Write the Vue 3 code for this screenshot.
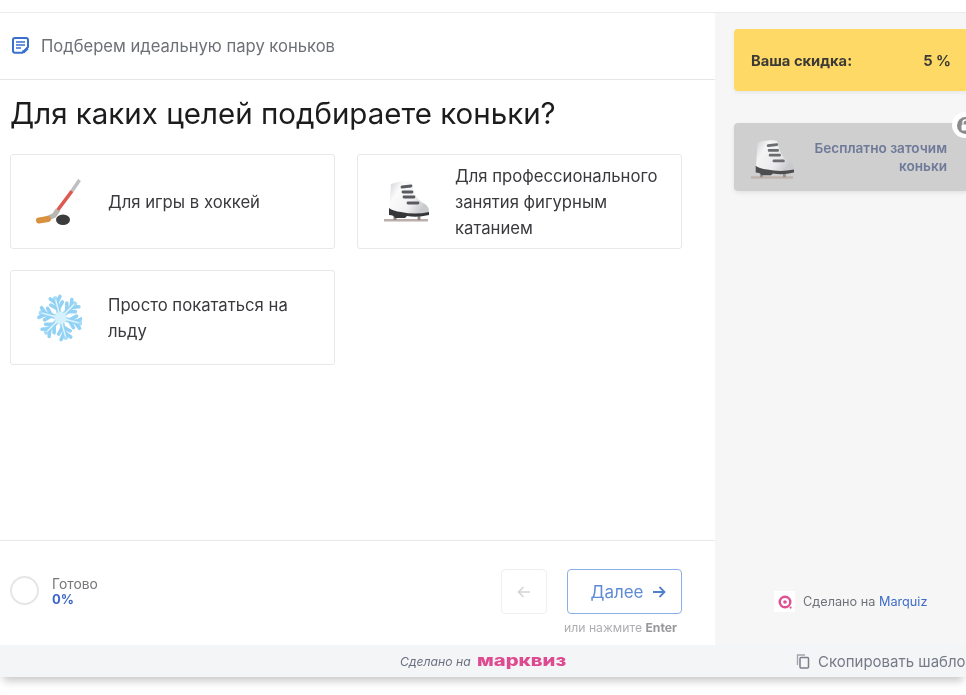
<script setup>
const options = [
  { id: "stick", text: "Для игры в хоккей" },
  { id: "skate", text: "Для профессионального занятия фигурным катанием" },
  { id: "flake", text: "Просто покататься на льду" },
];
const flakeArms = [0, 60, 120, 180, 240, 300];
</script>

<template>
  <div class="page">
    <svg class="defs" width="0" height="0">
      <defs>
        <linearGradient id="bootFill" x1="0" y1="0" x2="1" y2="0.5">
          <stop offset="0" stop-color="#cfd0d4" />
          <stop offset="0.3" stop-color="#fbfbfc" />
          <stop offset="0.7" stop-color="#f1f1f3" />
          <stop offset="1" stop-color="#c9cace" />
        </linearGradient>
        <symbol id="skate" viewBox="0 0 48 48">
          <path d="M3 41 H47 V43.5 H3 Z" fill="#bcaeaa" />
          <path d="M14 38 V42 M38 37 V42" stroke="#8f8785" stroke-width="3" />
          <path d="M10 6 Q20 2 30 4 L33 14 Q36 22 44 26 Q48 29 48 33 L48 36 L8 36 Q9 20 10 6 Z" fill="url(#bootFill)" />
          <path d="M8 30 Q12 33 20 34 Q34 37 48 34 L48 37 Q36 40 26 38 L24 40 L14 40 Q13 37 8 37 Z" fill="#37373a" />
          <path d="M21 9 L30 8 M22 14 L31 14 M23 19 L33 19 M27 25 L37 25" stroke="#5a5b60" stroke-width="2.8" stroke-linecap="round" />
        </symbol>
      </defs>
    </svg>

    <div class="top-strip"></div>

    <div class="main">
      <section class="quiz">
        <header class="quiz-head">
          <svg class="doc-icon" width="17" height="17" viewBox="0 0 17 17">
            <path d="M3 1 H14 Q16 1 16 3 V10 L10.5 15.8 H3 Q1 15.8 1 13.8 V3 Q1 1 3 1 Z" fill="none" stroke="#3a6fd0" stroke-width="2" />
            <path d="M4 5 H13 M4 8 H13 M4 11 H9" stroke="#3a6fd0" stroke-width="1.5" />
            <path d="M10.5 13.5 L12.3 15.2 L16 11.6" fill="none" stroke="#3a6fd0" stroke-width="1.6" />
          </svg>
          <span>Подберем идеальную пару коньков</span>
        </header>

        <div class="quiz-body">
          <h1>Для каких целей подбираете коньки?</h1>
          <div class="options">
            <div v-for="o in options" :key="o.id" class="option">
              <svg v-if="o.id === 'stick'" class="opt-icon" viewBox="0 0 48 48">
                <path d="M45.5 2 L38 13" stroke="#bcbec2" stroke-width="3.4" />
                <path d="M38 13 L23 33" stroke="#dc5a50" stroke-width="3.6" />
                <path d="M24 32 L20 37.5 L12 41" fill="none" stroke="#b9b7b0" stroke-width="5" stroke-linejoin="round" />
                <path d="M14 41 L5 42.5" stroke="#d9913f" stroke-width="6" stroke-linecap="round" />
                <ellipse cx="29" cy="41.7" rx="7" ry="5.3" fill="#3c3c3f" />
              </svg>
              <svg v-else-if="o.id === 'skate'" class="opt-icon"><use href="#skate" /></svg>
              <svg v-else class="opt-icon" viewBox="-26.5 -24 48 48">
                <g transform="rotate(-15)">
                  <g v-for="a in flakeArms" :key="a" :transform="`rotate(${a})`">
                    <path d="M0 -3 L0 -20" stroke="#a6dcf8" stroke-width="5" stroke-linecap="round" />
                    <path d="M0 -9 L-6 -15 M0 -9 L6 -15 M0 -15 L-5 -21 M0 -15 L5 -21" stroke="#93d2f4" stroke-width="3.6" stroke-linecap="round" />
                    <path d="M0 -4 L0 -19" stroke="#e3f5fd" stroke-width="1.4" />
                  </g>
                  <circle r="6" fill="#d5f1fc" />
                </g>
              </svg>
              <span>{{ o.text }}</span>
            </div>
          </div>
        </div>

        <footer class="quiz-foot">
          <div class="progress">
            <div class="ring"></div>
            <div class="progress-text">
              <span class="ready">Готово</span>
              <b>0%</b>
            </div>
          </div>
          <div class="nav">
            <div class="nav-buttons">
              <button class="btn-prev" disabled>
                <svg width="14" height="14" viewBox="0 0 14 14"><path d="M13 7 H1.5 M6.5 2 L1.5 7 L6.5 12" fill="none" stroke="#d2d4d8" stroke-width="1.6" /></svg>
              </button>
              <button class="btn-next">
                Далее
                <svg width="14" height="14" viewBox="0 0 14 14"><path d="M1 7 H12.5 M7.5 2 L12.5 7 L7.5 12" fill="none" stroke="#4f7fd2" stroke-width="1.8" /></svg>
              </button>
            </div>
            <div class="hint">или нажмите <b>Enter</b></div>
          </div>
        </footer>
      </section>

      <aside class="side">
        <div class="discount">
          <span>Ваша скидка:</span>
          <span>5 %</span>
        </div>
        <div class="bonus">
          <svg class="bonus-icon"><use href="#skate" /></svg>
          <span class="bonus-text">Бесплатно заточим коньки</span>
          <div class="lock">
            <svg width="17" height="17" viewBox="0 0 17 17">
              <circle cx="8.5" cy="8.5" r="8.5" fill="#8a8a8c" />
              <rect x="4.5" y="7.5" width="8" height="6" rx="1" fill="#fff" />
              <path d="M6 7.5 V5.5 a2.5 2.5 0 0 1 5 0 V7.5" fill="none" stroke="#fff" stroke-width="1.4" />
            </svg>
          </div>
        </div>
        <div class="made">
          <div class="made-logo">
            <svg width="14" height="14" viewBox="0 0 14 14">
              <circle cx="7" cy="7" r="5.3" fill="none" stroke="#df4f92" stroke-width="2.4" />
              <circle cx="7" cy="7" r="1.8" fill="#df4f92" />
              <circle cx="12.6" cy="12.6" r="1.1" fill="#df4f92" />
            </svg>
          </div>
          <span>Сделано на <a>Marquiz</a></span>
        </div>
      </aside>
    </div>

    <div class="bottom-bar">
      <div class="brand">
        <i>Сделано на</i>
        <b class="brand-name">марквиз</b>
      </div>
      <div class="copy">
        <svg width="14" height="15" viewBox="0 0 14 15">
          <rect x="4" y="3.5" width="8.5" height="10.5" rx="1" fill="none" stroke="#7a7f8a" stroke-width="1.5" />
          <path d="M1.5 11 V1 H9" fill="none" stroke="#a2a5ad" stroke-width="1.4" />
        </svg>
        <span>Скопировать шаблон</span>
      </div>
    </div>
  </div>
</template>

<style>
html, body {
  margin: 0;
  background: #fff;
}
</style>

<style scoped>
.page {
  width: 966px;
  height: 695px;
  overflow: hidden;
  font-family: Inter, "Liberation Sans", sans-serif;
  background: #fff;
  display: flex;
  flex-direction: column;
  filter: blur(0.35px);
}

.defs {
  position: absolute;
}

.top-strip {
  height: 12px;
  flex-shrink: 0;
  border-bottom: 1px solid #ececee;
}

.main {
  height: 632px;
  flex-shrink: 0;
  display: flex;
}

.quiz {
  width: 715px;
  flex-shrink: 0;
  display: flex;
  flex-direction: column;
}

.quiz-head {
  height: 65px;
  padding-bottom: 1px;
  border-bottom: 1px solid #e6e6e8;
  display: flex;
  align-items: center;
  gap: 12px;
  padding-left: 12px;
  font-size: 16.6px;
  color: #6d7076;
}

.doc-icon {
  flex-shrink: 0;
}

.quiz-body {
  flex: 1;
  padding: 0 33px 0 10px;
}

h1 {
  margin: 16px 0 23px;
  font-size: 29.5px;
  line-height: 35px;
  font-weight: 400;
  color: #1c1c1e;
}

.options {
  display: grid;
  grid-template-columns: 325px 325px;
  column-gap: 22px;
  row-gap: 21px;
}

.option {
  height: 95px;
  box-sizing: border-box;
  border: 1px solid #e8e8ea;
  border-radius: 3px;
  display: flex;
  align-items: center;
  padding: 0 20px 0 23px;
  gap: 26px;
  font-size: 16.7px;
  line-height: 26px;
  color: #3a3a3e;
}

.opt-icon {
  width: 48px;
  height: 48px;
  flex-shrink: 0;
}

.quiz-foot {
  height: 105px;
  box-sizing: border-box;
  border-top: 1px solid #e8e8ea;
  display: flex;
  justify-content: space-between;
  padding: 28px 33px 0 10px;
}

.progress {
  display: flex;
  align-items: center;
  gap: 13px;
  height: 43px;
}

.ring {
  width: 29px;
  height: 29px;
  box-sizing: border-box;
  border: 2px solid #e6e6e6;
  border-radius: 50%;
}

.progress-text {
  display: flex;
  flex-direction: column;
  margin-top: 2px;
  font-size: 13.8px;
  line-height: 15px;
}

.ready {
  color: #77777b;
}

.progress-text b {
  color: #3d66c9;
  font-size: 13px;
  line-height: 15px;
}

.nav {
  display: flex;
  flex-direction: column;
  align-items: flex-end;
}

.nav-buttons {
  display: flex;
  gap: 20px;
}

button {
  height: 45px;
  box-sizing: border-box;
  background: #fff;
  border-radius: 4px;
  font-family: inherit;
  display: flex;
  align-items: center;
  justify-content: center;
}

.btn-prev {
  width: 46px;
  border: 1px solid #efeff1;
}

.btn-next {
  width: 115px;
  border: 1px solid #8bb0e8;
  color: #5f8ad4;
  font-size: 17px;
  gap: 8px;
  padding: 0 0 0 7px;
}

.hint {
  margin-top: 6px;
  padding-right: 5px;
  font-size: 12.2px;
  line-height: 15px;
  color: #aeaeb2;
}

.hint b {
  color: #98989c;
}

.side {
  flex: 1;
  min-width: 0;
  background: #f6f6f7;
  box-sizing: border-box;
  padding: 16px 0 0 19px;
  display: flex;
  flex-direction: column;
  align-items: flex-start;
}

.discount {
  width: 234px;
  height: 62px;
  flex-shrink: 0;
  box-sizing: border-box;
  background: #ffd966;
  border-radius: 4px;
  box-shadow: 0 2px 4px rgba(0, 0, 0, 0.06);
  display: flex;
  align-items: center;
  justify-content: space-between;
  padding: 2px 17px 0;
  font-size: 14.7px;
  font-weight: 700;
  color: #3b3a36;
}

.bonus {
  position: relative;
  width: 234px;
  height: 68px;
  flex-shrink: 0;
  margin-top: 32px;
  box-sizing: border-box;
  background: #cfcfd0;
  border-radius: 4px;
  box-shadow: 0 2px 4px rgba(0, 0, 0, 0.08);
  display: flex;
  align-items: center;
  padding: 0 21px 0 14px;
  gap: 18px;
}

.bonus-icon {
  width: 46px;
  height: 46px;
  flex-shrink: 0;
  opacity: 0.85;
  margin-top: 6px;
}

.bonus-text {
  flex: 1;
  text-align: right;
  font-size: 13.6px;
  line-height: 18px;
  font-weight: 600;
  color: #6f7a99;
}

.lock {
  position: absolute;
  right: -10px;
  top: -11px;
  width: 26px;
  height: 26px;
  border-radius: 50%;
  background: #fff;
  display: flex;
  align-items: center;
  justify-content: center;
}

.made {
  margin-top: auto;
  margin-bottom: 33px;
  margin-left: 40px;
  display: flex;
  align-items: center;
  gap: 8px;
  font-size: 12.7px;
  color: #6f7278;
}

.made-logo {
  width: 21px;
  height: 21px;
  background: #fff;
  display: flex;
  align-items: center;
  justify-content: center;
}

.made a {
  color: #3f6cc9;
}

.bottom-bar {
  height: 32px;
  flex-shrink: 0;
  background: #f4f5f7;
  box-shadow: 0 7px 9px -3px rgba(0, 0, 0, 0.22);
  display: flex;
  align-items: center;
  padding-left: 400px;
}

.brand {
  display: flex;
  align-items: center;
  gap: 6px;
  width: 396px;
  flex-shrink: 0;
  font-size: 12.2px;
  color: #6b7080;
}

.brand-name {
  display: inline-block;
  font-size: 15px;
  font-weight: 800;
  line-height: 16px;
  color: #de4a8f;
  transform: scaleX(1.35);
  transform-origin: left center;
}

.copy {
  display: flex;
  align-items: center;
  gap: 8px;
  white-space: nowrap;
  font-size: 15px;
  color: #767b88;
}
</style>
